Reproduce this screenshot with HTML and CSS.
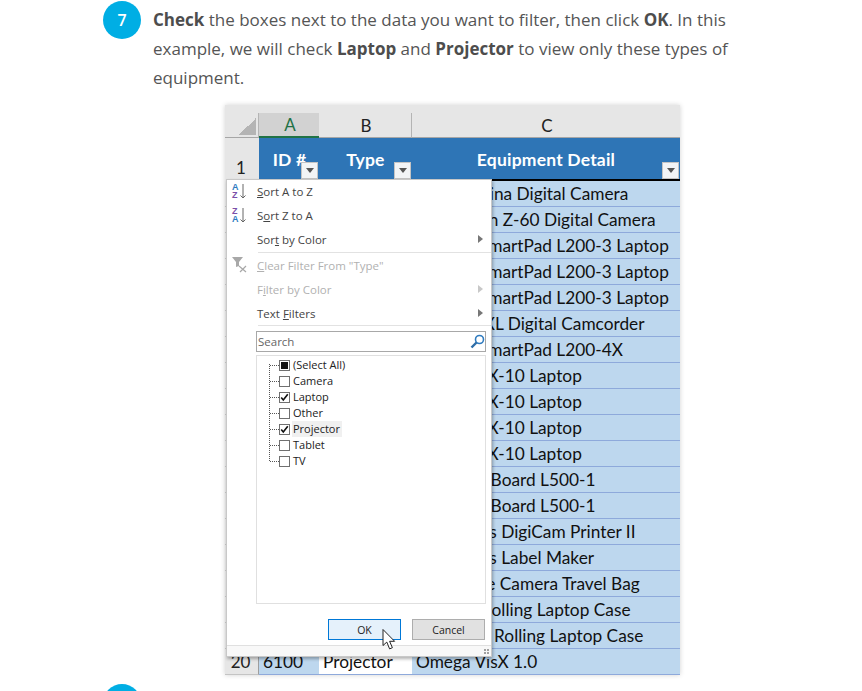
FILE: index.html
```html
<!DOCTYPE html>
<html lang="en">
<head>
<meta charset="utf-8">
<title>Filtering data</title>
<link rel="stylesheet" href="styles.css">
</head>
<body>
<main class="article">
  <section class="step">
    <div class="badge">7</div>
    <div class="step-body">
      <p class="copy"><b>Check</b> the boxes next to the data you want to filter, then click <b>OK</b>. In this example, we will check <b>Laptop</b> and <b>Projector</b> to view only these types of equipment.</p>
      <figure class="shot">
        <div class="sheet">
          <div class="colhead corner"><span class="corner-mark"></span></div>
          <div class="colhead selected">A</div>
          <div class="colhead">B</div>
          <div class="colhead">C</div>

          <div class="rowhead rowhead-first">1</div>
          <div class="title title-id">ID #<span class="drop"></span></div>
          <div class="title">Type<span class="drop"></span></div>
          <div class="title">Equipment Detail<span class="drop"></span></div>

          <div class="rowhead">2</div><div class="cell"></div><div class="cell"></div><div class="cell">Vega Lumina Digital Camera</div>
          <div class="rowhead">3</div><div class="cell"></div><div class="cell"></div><div class="cell">Ace Canon Z-60 Digital Camera</div>
          <div class="rowhead">4</div><div class="cell"></div><div class="cell"></div><div class="cell">Ultimax SmartPad L200-3 Laptop</div>
          <div class="rowhead">5</div><div class="cell"></div><div class="cell"></div><div class="cell">Ultimax SmartPad L200-3 Laptop</div>
          <div class="rowhead">6</div><div class="cell"></div><div class="cell"></div><div class="cell">Ultimax SmartPad L200-3 Laptop</div>
          <div class="rowhead">7</div><div class="cell"></div><div class="cell"></div><div class="cell">Olympia XL Digital Camcorder</div>
          <div class="rowhead">8</div><div class="cell"></div><div class="cell"></div><div class="cell">Ultimax SmartPad L200-4X</div>
          <div class="rowhead">9</div><div class="cell"></div><div class="cell"></div><div class="cell">Proximar X-10 Laptop</div>
          <div class="rowhead">10</div><div class="cell"></div><div class="cell"></div><div class="cell">Proximar X-10 Laptop</div>
          <div class="rowhead">11</div><div class="cell"></div><div class="cell"></div><div class="cell">Proximar X-10 Laptop</div>
          <div class="rowhead">12</div><div class="cell"></div><div class="cell"></div><div class="cell">Proximar X-10 Laptop</div>
          <div class="rowhead">13</div><div class="cell"></div><div class="cell"></div><div class="cell">ProSmart Board L500-1</div>
          <div class="rowhead">14</div><div class="cell"></div><div class="cell"></div><div class="cell">ProSmart Board L500-1</div>
          <div class="rowhead">15</div><div class="cell"></div><div class="cell"></div><div class="cell">Pixel Opus DigiCam Printer II</div>
          <div class="rowhead">16</div><div class="cell"></div><div class="cell"></div><div class="cell">Pixel Opus Label Maker</div>
          <div class="rowhead">17</div><div class="cell"></div><div class="cell"></div><div class="cell">Adventure Camera Travel Bag</div>
          <div class="rowhead">18</div><div class="cell"></div><div class="cell"></div><div class="cell">Imperial Rolling Laptop Case</div>
          <div class="rowhead">19</div><div class="cell"></div><div class="cell"></div><div class="cell">Executive Rolling Laptop Case</div>
          <div class="rowhead">20</div><div class="cell">6100</div><div class="cell cell-white">Projector</div><div class="cell">Omega VisX 1.0</div>
        </div>

        <div class="menu">
          <div class="item">
            <span class="slot"><span class="sort-letters"><span class="l-blue">A</span><span class="l-purple">Z</span></span><svg class="sort-arrow" width="6" height="15" viewBox="0 0 6 15"><path d="M3 0V14M.5 11.5 3 14 5.5 11.5" fill="none" stroke="#666" stroke-width="1"/></svg></span>
            <span><u>S</u>ort A to Z</span>
          </div>
          <div class="item">
            <span class="slot"><span class="sort-letters"><span class="l-purple">Z</span><span class="l-blue">A</span></span><svg class="sort-arrow" width="6" height="15" viewBox="0 0 6 15"><path d="M3 0V14M.5 11.5 3 14 5.5 11.5" fill="none" stroke="#666" stroke-width="1"/></svg></span>
            <span>S<u>o</u>rt Z to A</span>
          </div>
          <div class="item">
            <span class="slot"></span><span>Sor<u>t</u> by Color</span><span class="arrow"></span>
          </div>
          <div class="sep sep-first"></div>
          <div class="item off">
            <span class="slot"><svg width="16" height="16" viewBox="0 0 16 16"><path d="M0 0H11L7 5V9L4 10V5Z" fill="#a8a8a8"/><path d="M7 9 14 15M14 9 8 15" stroke="#a8a8a8" stroke-width="1.2" fill="none"/></svg></span>
            <span><u>C</u>lear Filter From "Type"</span>
          </div>
          <div class="item off">
            <span class="slot"></span><span>F<u>i</u>lter by Color</span><span class="arrow"></span>
          </div>
          <div class="item">
            <span class="slot"></span><span>Text <u>F</u>ilters</span><span class="arrow"></span>
          </div>
          <div class="sep"></div>
          <div class="search">
            <span>Search</span>
            <svg width="15" height="15" viewBox="0 0 15 15"><circle cx="9.5" cy="5.5" r="4" fill="none" stroke="#2f7bbf" stroke-width="1.6"/><path d="M6.5 8.5 1.5 13.5" stroke="#2f6ea8" stroke-width="2.4"/></svg>
          </div>
          <ul class="tree">
            <li><span class="box box-mixed"></span><span class="lab">(Select All)</span></li>
            <li><span class="box"></span><span class="lab">Camera</span></li>
            <li><span class="box"><svg viewBox="0 0 11 11" width="9" height="9"><path d="M1.5 5.5 4 8.5 9.5 1.5" fill="none" stroke="#111" stroke-width="2"/></svg></span><span class="lab">Laptop</span></li>
            <li><span class="box"></span><span class="lab">Other</span></li>
            <li><span class="box"><svg viewBox="0 0 11 11" width="9" height="9"><path d="M1.5 5.5 4 8.5 9.5 1.5" fill="none" stroke="#111" stroke-width="2"/></svg></span><span class="lab lab-hover">Projector</span></li>
            <li><span class="box"></span><span class="lab">Tablet</span></li>
            <li><span class="box"></span><span class="lab">TV</span></li>
          </ul>
          <div class="buttons">
            <span class="btn btn-ok">OK</span>
            <span class="btn">Cancel</span>
          </div>
          <div class="grip-bar"><span class="grip"></span></div>
        </div>

        <svg class="cursor" width="16" height="23" viewBox="0 0 16 23"><path d="M1 1V17L4.8 13.6 7.6 20.4 10.4 19.2 7.6 12.8H12.6Z" transform="translate(0 .5)" fill="#fff" stroke="#222" stroke-width="1"/></svg>
      </figure>
    </div>
  </section>
  <section class="step">
    <div class="badge"></div>
  </section>
</main>
</body>
</html>
```
FILE: styles.css
```css
* { box-sizing: border-box; }
html, body { height: 100%; overflow: hidden; }
body { margin: 0; background: #fff; font-family: "Open Sans", sans-serif; color: #555; }
.article { padding: 1px 0 0 103px; }
.step { display: flex; gap: 12px; align-items: flex-start; }
.badge {
  flex: none; width: 38px; height: 38px; border-radius: 50%;
  background: #00aee4; color: #fff;
  display: flex; align-items: center; justify-content: center;
  font-size: 16px; font-weight: 600; padding-bottom: 1px;
}
.step-body { width: 599px; }
.copy { margin: 4px 0 0; font-size: 17px; line-height: 29px; }
.copy b { color: #4d4d4d; }

.shot { position: relative; width: 455px; margin: 13px auto 9px; box-shadow: 0 0 5px rgba(0,0,0,.18); }
.sheet {
  display: grid; grid-template-columns: 34px 60px 93px 268px;
  grid-auto-rows: 26px; grid-template-rows: 33px 43px;
  background: #e6e6e6; font-family: Lato, sans-serif; font-size: 17.3px; color: #111;
  overflow: hidden;
}
.colhead {
  margin-top: 8px; display: flex; align-items: center; justify-content: center;
  border-bottom: 1px solid #a6a6a6; border-right: 1px solid #b4b4b4;
  font-size: 17px; color: #222; padding-left: 2px;
}
.colhead:nth-child(4) { border-right: 0; }
.corner { align-items: flex-end; justify-content: flex-end; padding: 0 2px 2px 0; }
.corner-mark { width: 17px; height: 17px; background: linear-gradient(135deg, transparent 50%, #b4b4b4 50%); }
.selected { background: #d2d2d2; color: #1e7145; border-bottom: 2px solid #217346; border-right: 0; }
.rowhead {
  display: flex; align-items: center; justify-content: center;
  border-right: 1px solid #9e9e9e; border-bottom: 1px solid #c4c4c4;
  background: #e6e6e6; color: #222; font-size: 17px; padding-right: 2px;
}
.rowhead-first { align-items: flex-end; padding-bottom: 3px; border-bottom: 0; border-right: 0; }
.title {
  position: relative; background: #2e75b6; color: #fff; font-weight: 700;
  display: flex; align-items: center; justify-content: center; font-size: 17.5px; letter-spacing: .2px;
  border-bottom: 2px solid #000; padding-top: 2px;
}
.title-id { padding-left: 1px; }
.drop {
  position: absolute; right: 1px; bottom: 0; width: 17px; height: 17px;
  background: #f2f4f6; border: 1px solid #c4c4c4;
  display: flex; align-items: center; justify-content: center;
}
.drop::after {
  content: ""; border: 4px solid transparent; border-top: 5px solid #555; border-bottom: 0;
}
.cell {
  background: #bdd7ee; border-bottom: 1px solid #8ea9db;
  padding: 0 0 0 4px; display: flex; align-items: center; white-space: nowrap; overflow: hidden;
}
.cell-white { background: #fff; }

.menu {
  position: absolute; left: 1px; top: 74px; width: 266px; height: 478px;
  background: #fff; border: 1px solid #c8c8c8;
  box-shadow: 1px 2px 3px rgba(0,0,0,.3);
  font-size: 11.5px; color: #444; display: flex; flex-direction: column;
}
.item { display: flex; align-items: center; height: 24px; flex: none; }
.item:first-child { margin-top: -1px; }
.off { color: #b1b1b1; }
.slot { width: 30px; flex: none; display: flex; align-items: center; padding-left: 5px; gap: 1px; }
.sort-letters { display: flex; flex-direction: column; font: 700 9px/8px "Liberation Sans", sans-serif; }
.l-blue { color: #2f7bbf; }
.l-purple { color: #7b4fa8; }
.arrow {
  margin-left: auto; margin-right: 8px;
  border: 4px solid transparent; border-left: 5px solid #777; border-right: 0;
}
.off .arrow { border-left-color: #c8c8c8; }
.sep { height: 1px; background: #e2e2e2; margin-left: 31px; flex: none; }
.sep-first { margin-top: 1px; }
.search {
  margin: 5px 5px 0 29px; height: 21px; flex: none; border: 1px solid #a8a8a8;
  display: flex; align-items: center; justify-content: space-between; padding: 0 0 0 1px; color: #666; font-size: 11.5px;
}
.tree {
  position: relative; list-style: none; margin: 3px 5px 0 29px; padding: 1px 0 0 22px; height: 249px; flex: none;
  border: 1px solid #e0e0e0; font-size: 11px; color: #222;
}
.tree::before {
  content: ""; position: absolute; left: 12px; top: 8px; height: 97px; border-left: 1px dotted #555;
}
.tree li { height: 16px; display: flex; align-items: center; }
.tree li::before { content: ""; width: 9px; margin-left: -9px; border-top: 1px dotted #555; flex: none; }
.box {
  width: 11px; height: 11px; border: 1px solid #707070; background: #fff; flex: none;
  display: flex; align-items: center; justify-content: center;
}
.box-mixed::after { content: ""; width: 7px; height: 7px; background: #111; }
.lab { margin-left: 2px; padding: 0 1px; line-height: 16px; font-weight: 500; }
.lab-hover { background: #f0f0f0; padding-right: 2px; }
.buttons { display: flex; justify-content: flex-end; gap: 11px; margin: 15px 6px 0 0; flex: none; }
.btn {
  width: 73px; height: 21px; border: 1px solid #adadad; background: #e1e1e1;
  display: flex; align-items: center; justify-content: center; font-size: 10.5px; color: #222;
}
.btn-ok { background: #e5f1fb; border: 1px solid #0078d7; }
.grip-bar {
  margin-top: 5px; flex: 1; background: #f8f8f8; border-top: 1px solid #e0e0e0;
  display: flex; justify-content: flex-end; align-items: flex-end; padding: 0 1px 1px 0;
}
.grip {
  width: 6px; height: 6px;
  background: radial-gradient(circle at 1px 1px, #a0a0a0 1px, transparent 1.1px) 0 0 / 3px 3px;
}
.cursor { position: absolute; left: 157px; top: 523px; }
```
